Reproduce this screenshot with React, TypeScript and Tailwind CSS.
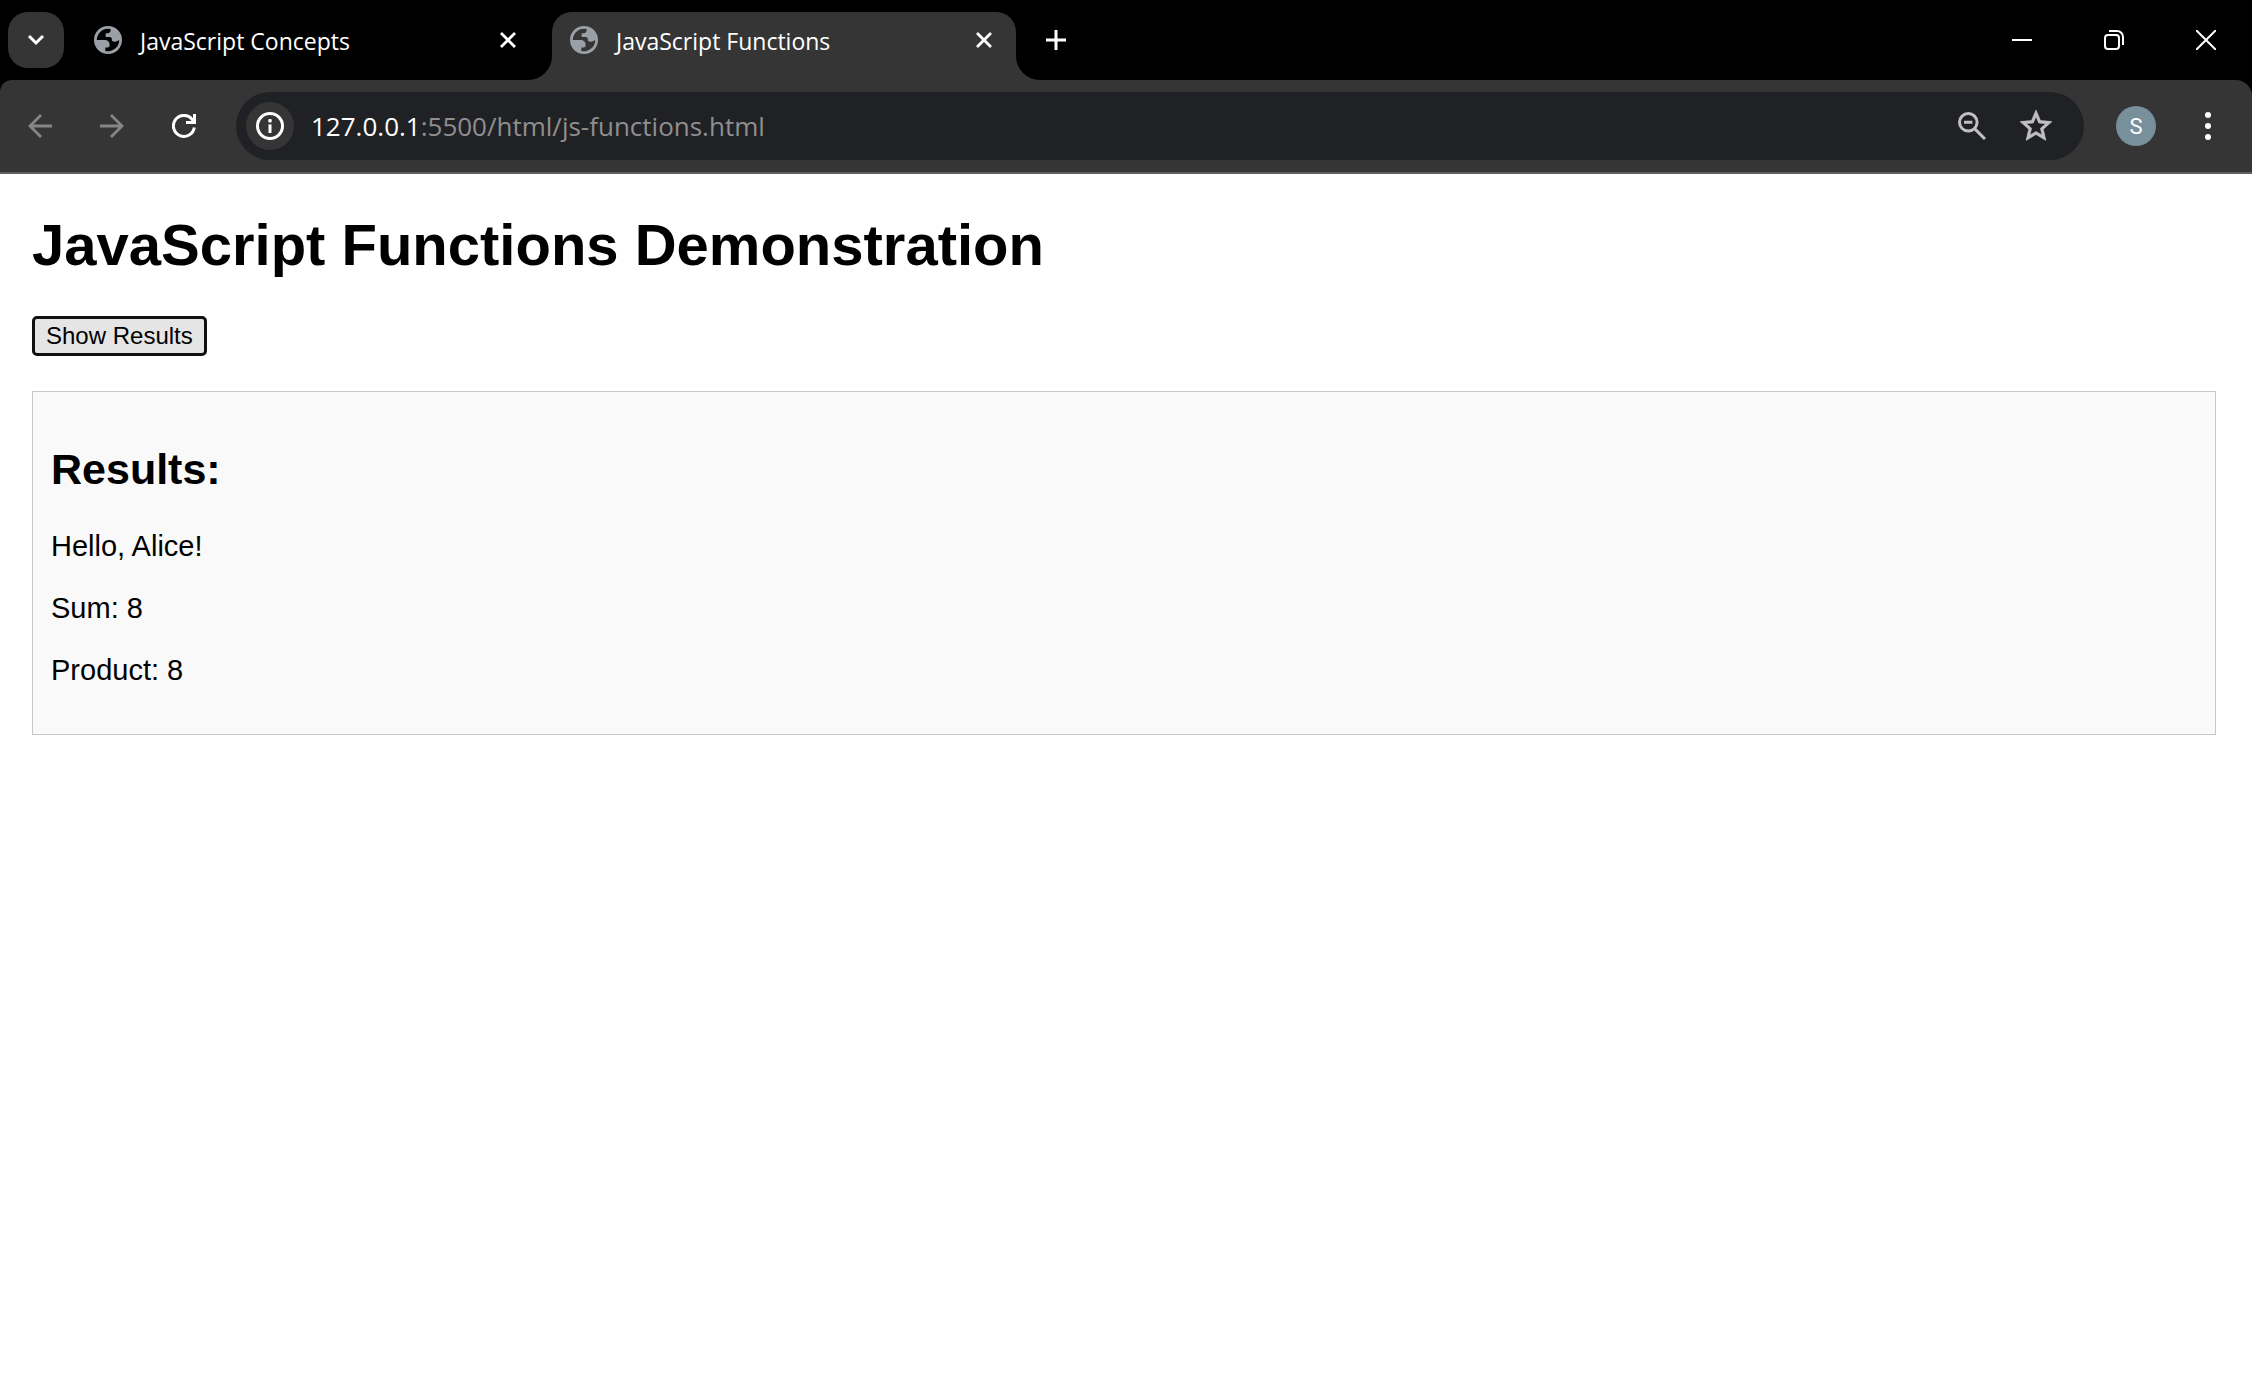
import React from "react";

type IconProps = { className?: string };

function Globe({ className = "" }: IconProps) {
  return (
    <svg viewBox="0 0 28 28" className={className} aria-hidden="true">
      <path
        fillRule="evenodd"
        fill="#9aa0a6"
        d="M14 0 A14 14 0 1 1 14 28 A14 14 0 1 1 14 0 Z
           M2.8 14 A11.3 11.3 0 0 1 16.5 3 V4.5 C16.5 6.3 15.3 7.3 13.8 7.3 H12.6 C12 7.3 11.6 7.7 11.6 8.3 V10 C11.6 10.6 12 11 12.6 11 H15.6 C17 11 17.8 11.9 17.8 13.2 V14.6 C18.8 16.2 22 16.2 25.2 14 A11.2 11.2 0 0 1 11.3 24.9 V21.6 H13.4 C14.9 21.6 15.6 20.8 15.6 19.6 V18.4 C15.6 15.6 13.4 14 11 14 Z"
      />
    </svg>
  );
}

function Cross({ className = "" }: IconProps) {
  return (
    <svg viewBox="0 0 16 16" className={className} fill="none" stroke="currentColor" strokeWidth="2.8" aria-hidden="true">
      <path d="M1 1 L15 15 M15 1 L1 15" />
    </svg>
  );
}

function Tab({ title, active }: { title: string; active?: boolean }) {
  return (
    <div
      className={
        active
          ? "relative flex h-[68px] w-[464px] items-center rounded-t-[20px] bg-[#353535] pr-6 pl-[18px]"
          : "relative flex h-[68px] w-[464px] items-center pr-6 pl-[18px]"
      }
    >
      {active && (
        <>
          <span className="absolute bottom-0 -left-6 h-6 w-6 bg-[#353535]">
            <span className="block h-6 w-6 rounded-br-[24px] bg-black" />
          </span>
          <span className="absolute -right-6 bottom-0 h-6 w-6 bg-[#353535]">
            <span className="block h-6 w-6 rounded-bl-[24px] bg-black" />
          </span>
        </>
      )}
      <button type="button" role="tab" aria-selected={!!active} className="flex flex-1 items-center gap-[18px] pb-3 text-left text-[23px] leading-8 text-white">
        <Globe className="h-7 w-7" />
        <span className="pt-[2px]">{title}</span>
      </button>
      <button type="button" aria-label={"Close " + title} className="mb-3 text-white">
        <Cross className="h-4 w-4" />
      </button>
    </div>
  );
}

function TabStrip() {
  return (
    <header className="flex h-20 items-start bg-black pt-3 pl-2 text-white">
      <button type="button" aria-label="Search tabs" className="flex h-14 w-14 items-center justify-center rounded-[20px] bg-[#353535]">
        <svg viewBox="0 0 18 12" className="h-3 w-[18px]" fill="none" stroke="currentColor" strokeWidth="3" aria-hidden="true">
          <path d="M2 2 L9 9 L16 2" />
        </svg>
      </button>
      <div role="tablist" className="ml-3 flex gap-3">
        <Tab title="JavaScript Concepts" />
        <Tab title="JavaScript Functions" active />
      </div>
      <button type="button" aria-label="New tab" className="ml-3 flex h-14 w-14 items-center justify-center">
        <svg viewBox="0 0 20 20" className="h-5 w-5" stroke="currentColor" strokeWidth="3" aria-hidden="true">
          <path d="M0 10 H20 M10 0 V20" />
        </svg>
      </button>
      <div className="ml-auto flex h-14 items-center">
        <button type="button" aria-label="Minimize" className="flex h-14 w-[92px] items-center justify-center">
          <svg viewBox="0 0 20 20" className="h-5 w-5" stroke="currentColor" strokeWidth="2" aria-hidden="true">
            <path d="M0 10 H20" />
          </svg>
        </button>
        <button type="button" aria-label="Restore" className="flex h-14 w-[92px] items-center justify-center">
          <svg viewBox="0 0 20 20" className="h-5 w-5" fill="none" stroke="currentColor" strokeWidth="2" aria-hidden="true">
            <rect x="1" y="5" width="14" height="14" rx="3" />
            <path d="M5 1 H13 A6 6 0 0 1 19 7 V15" />
          </svg>
        </button>
        <button type="button" aria-label="Close window" className="flex h-14 w-[92px] items-center justify-center">
          <svg viewBox="0 0 20 20" className="h-5 w-5" stroke="currentColor" strokeWidth="2" aria-hidden="true">
            <path d="M0 0 L20 20 M20 0 L0 20" />
          </svg>
        </button>
      </div>
    </header>
  );
}

function Toolbar() {
  return (
    <div className="bg-black">
      <nav className="flex h-[94px] items-center rounded-tl-[12px] rounded-tr-[16px] border-b-2 border-[#5f5f5f] bg-[#353535] pr-3 pl-1">
        <button type="button" aria-label="Back" className="flex h-14 w-[72px] items-center justify-center text-[#868686]">
          <svg viewBox="0 0 24 24" className="h-6 w-6" fill="none" stroke="currentColor" strokeWidth="2.8" aria-hidden="true">
            <path d="M24 12 H2 M13 1 L2 12 L13 23" />
          </svg>
        </button>
        <button type="button" aria-label="Forward" className="flex h-14 w-[72px] items-center justify-center text-[#868686]">
          <svg viewBox="0 0 24 24" className="h-6 w-6" fill="none" stroke="currentColor" strokeWidth="2.8" aria-hidden="true">
            <path d="M0 12 H22 M11 1 L22 12 L11 23" />
          </svg>
        </button>
        <button type="button" aria-label="Reload" className="flex h-14 w-[72px] items-center justify-center text-white">
          <svg viewBox="0 0 24 24" className="h-6 w-6" fill="none" stroke="currentColor" strokeWidth="3" aria-hidden="true">
            <path d="M22.3 13.5 A10.5 10.5 0 1 1 20 5.2 L22 8" />
            <path d="M22.5 0 V8.5 H14" />
          </svg>
        </button>
        <div className="ml-4 flex h-[68px] flex-1 items-center rounded-full bg-[#202124] pr-8 pl-[10px]">
          <button type="button" aria-label="View site information" className="flex h-12 w-12 items-center justify-center rounded-full bg-[#353535] text-white">
            <svg viewBox="0 0 28 28" className="h-7 w-7" aria-hidden="true">
              <circle cx="14" cy="14" r="12.5" fill="none" stroke="currentColor" strokeWidth="3" />
              <rect x="12.5" y="12.4" width="3" height="8.6" fill="currentColor" />
              <rect x="12.3" y="7" width="3.4" height="3.4" rx="1" fill="currentColor" />
            </svg>
          </button>
          <a href="#" className="ml-[17px] flex-1 text-[26px] leading-9 text-[#8f8f8f]">
            <span className="text-white">127.0.0.1</span>:5500/html/js-functions.html
          </a>
          <button type="button" aria-label="Zoom" className="mr-[34px] text-[#c0c0c0]">
            <svg viewBox="0 0 28 28" className="h-7 w-7" fill="none" stroke="currentColor" strokeWidth="3" aria-hidden="true">
              <circle cx="10.3" cy="10.3" r="8.8" />
              <path d="M6 10.3 H14.4 M16.6 16.6 L27 27" />
            </svg>
          </button>
          <button type="button" aria-label="Bookmark this page" className="text-[#c0c0c0]">
            <svg viewBox="2 2 20 20" className="h-8 w-8" fill="currentColor" stroke="currentColor" strokeWidth="0.4" aria-hidden="true">
              <path d="M22 9.24l-7.19-.62L12 2 9.19 8.63 2 9.24l5.46 4.73L5.82 21 12 17.27 18.18 21l-1.63-7.03L22 9.24zM12 15.4l-3.76 2.27 1-4.28-3.32-2.88 4.38-.38L12 6.1l1.71 4.04 4.38.38-3.32 2.88 1 4.28L12 15.4z" />
            </svg>
          </button>
        </div>
        <button type="button" aria-label="Profile" className="ml-8 flex h-10 w-10 items-center justify-center rounded-full bg-[#78909c] font-['Roboto',sans-serif] text-[22px] text-white">
          S
        </button>
        <button type="button" aria-label="Menu" className="ml-5 flex h-14 w-16 items-center justify-center text-white">
          <svg viewBox="0 0 6 28" className="h-7 w-[6px]" fill="currentColor" aria-hidden="true">
            <circle cx="3" cy="3" r="3" />
            <circle cx="3" cy="14" r="3" />
            <circle cx="3" cy="25" r="3" />
          </svg>
        </button>
      </nav>
    </div>
  );
}

export default function App() {
  return (
    <div className="min-h-screen bg-white font-['Open_Sans','Noto_Sans',sans-serif]">
      <TabStrip />
      <Toolbar />
      <main className="pt-[38px] pr-9 pl-8 font-['Liberation_Sans',Arial,sans-serif] text-[29px] text-black">
        <h1 className="text-[58px] leading-[66px] font-bold">JavaScript Functions Demonstration</h1>
        <button
          type="button"
          className="mt-[38px] flex h-10 items-center rounded-[5px] border-[3px] border-[#101010] bg-[#e5e5e5] px-[11px] text-2xl leading-8"
        >
          Show Results
        </button>
        <section className="mt-[35px] border border-[#c8c8c8] bg-[#f9f9f9] px-[18px] pt-[52px] pb-[47px]">
          <h2 className="text-[43px] leading-[50px] font-bold">Results:</h2>
          <div className="mt-9 flex flex-col gap-[29px] leading-[33px]">
            <p>Hello, Alice!</p>
            <p>Sum: 8</p>
            <p>Product: 8</p>
          </div>
        </section>
      </main>
    </div>
  );
}
